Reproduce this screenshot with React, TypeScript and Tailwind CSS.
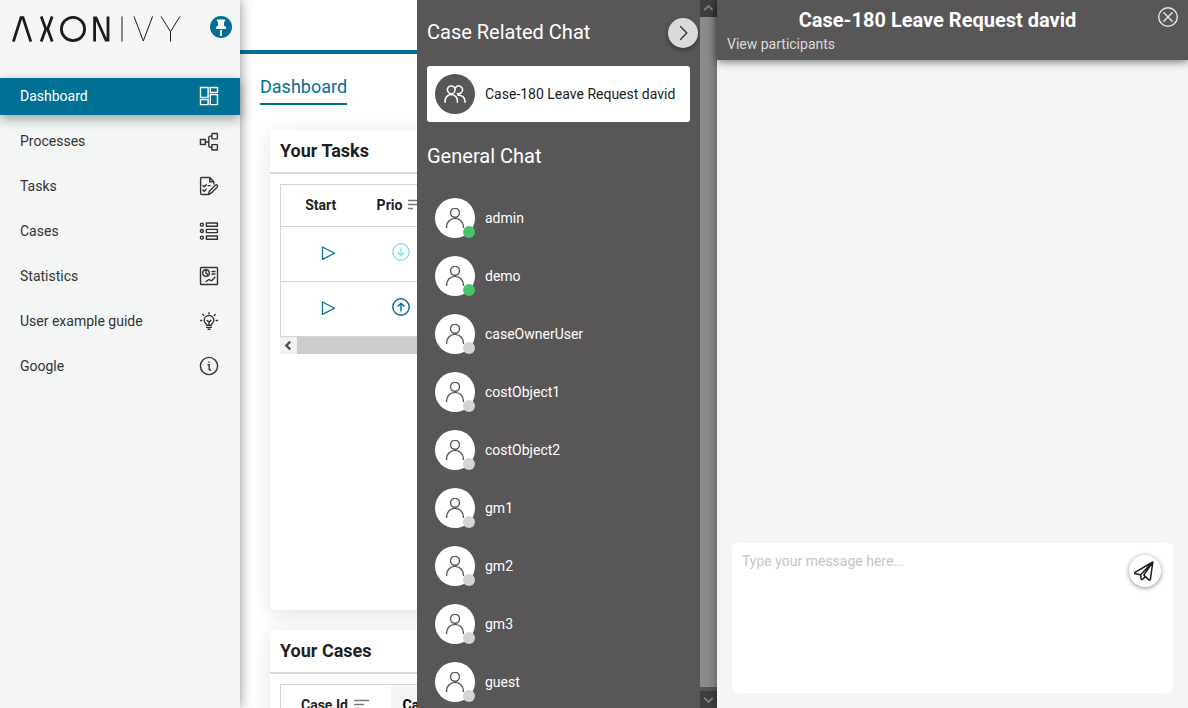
import type { ReactNode } from "react";
import clsx from "clsx";

interface IconProps {
  children: ReactNode;
  size?: string;
  width?: number;
  className?: string;
}

// All line icons share a 20x20 grid
function Icon({ children, size = "size-5", width = 1.4, className }: IconProps) {
  return (
    <svg
      viewBox="0 0 20 20"
      fill="none"
      stroke="currentColor"
      strokeWidth={width}
      strokeLinecap="round"
      strokeLinejoin="round"
      aria-hidden="true"
      className={clsx("shrink-0", size, className)}
    >
      {children}
    </svg>
  );
}

const menuItems = [
  {
    label: "Dashboard",
    active: true,
    icon: (
      <>
        <path d="M1.5 1.5h7.6v10H1.5zM11.3 1.5h7.2v5h-7.2zM1.5 13.6h7.6v5H1.5zM11.3 8.6h7.2v10h-7.2z" strokeLinejoin="miter" />
      </>
    ),
  },
  {
    label: "Processes",
    icon: (
      <>
        <rect x="1.4" y="8.5" width="5" height="5" />
        <rect x="12.8" y="2.5" width="5.6" height="5.4" rx="0.6" />
        <rect x="12.8" y="13.6" width="5.6" height="5.4" rx="0.6" />
        <path d="M6.4 11h3.4M12.8 5.1h-1.5q-1.5 0-1.5 1.5v8.2q0 1.5 1.5 1.5h1.5" />
      </>
    ),
  },
  {
    label: "Tasks",
    icon: (
      <>
        <path d="M14.8 8V5.8L10.8 1.5H2.9Q1.6 1.5 1.6 2.8v14.4q0 1.3 1.3 1.3h5.6M10.8 1.5v4.3h4" />
        <path d="M4 9.5l1.2 1.2 2-2M4 14l1.2 1.2 2-2M9.2 9.6h2M9.5 18.5l.8-3.2 6.2-6.2q.9-.6 1.7.1.8.9.1 1.7l-6.2 6.3z" />
      </>
    ),
  },
  {
    label: "Cases",
    icon: (
      <>
        <circle cx="2.9" cy="3.6" r="1.5" />
        <circle cx="2.9" cy="10" r="1.5" />
        <circle cx="2.9" cy="16.6" r="1.5" />
        <path d="M7.4 2h11v3.2h-11zM7.4 8.4h11v3.2h-11zM7.4 15h11v3.2h-11z" />
      </>
    ),
  },
  {
    label: "Statistics",
    icon: (
      <>
        <rect x="1.5" y="1.5" width="17" height="17" rx="0.8" />
        <circle cx="7" cy="7" r="3.3" />
        <path d="M7 3.7V7l2 2M13 5.5h3M13 8h3M7 15.5l3-2 2.5 1.3 3.5-3.6" />
      </>
    ),
  },
  {
    label: "User example guide",
    icon: (
      <>
        <path d="M7.6 14.2q0-1.2-1.2-2.2-1.2-1.1-1.2-2.7a4.8 4.8 0 0 1 9.6 0q0 1.6-1.2 2.7-1.2 1-1.2 2.2zM7.6 16.4h4.8M9 18.3h2M10 14v-3l-2-1.6M10 11l2-1.6" />
        <path d="M10 2.8V1.6M4.8 4.4l-1-1M15.2 4.4l1-1M2.8 9.5H1.5M17.2 9.5h1.3" />
      </>
    ),
  },
  {
    label: "Google",
    icon: (
      <>
        <circle cx="10" cy="10" r="8.6" />
        <path d="M9 8.8h1.2v4.4q0 .8.9.8h.5M10 6v.2" />
      </>
    ),
  },
];

const users = [
  { name: "admin", online: true },
  { name: "demo", online: true },
  { name: "caseOwnerUser", online: false },
  { name: "costObject1", online: false },
  { name: "costObject2", online: false },
  { name: "gm1", online: false },
  { name: "gm2", online: false },
  { name: "gm3", online: false },
  { name: "guest", online: false },
];

const tasks = [
  { id: 1, priority: "low" },
  { id: 2, priority: "high" },
];

function Logo() {
  return (
    <svg viewBox="0 0 170 26" fill="none" stroke="#1b1b1b" role="img" aria-label="Axon Ivy" className="h-[26px] w-[170px]">
      <g strokeWidth="2.8">
        <polyline points="1.4,25.6 9,1.6 11,1.6 18.8,25.6" />
        <polyline points="29.2,0.4 33.8,13 29.2,25.6" />
        <polyline points="40.2,0.4 35.6,13 40.2,25.6" />
        <circle cx="61" cy="13" r="11.6" />
        <polyline points="82.6,25.6 82.6,1.8 84,1.8 94,24.2 96,24.2 96,0.4" />
      </g>
      <g strokeWidth="1">
        <line x1="110" y1="0.4" x2="110" y2="25.6" />
        <polyline points="122,0.4 131.3,25 140.6,0.4" />
        <polyline points="149,0.4 158.5,15.6 168,0.4" />
        <line x1="158.5" y1="15.6" x2="158.5" y2="25.6" />
      </g>
    </svg>
  );
}

function Sidebar() {
  return (
    <aside className="z-10 w-60 shrink-0 bg-[#f4f6f5] shadow-[0_0_12px_rgba(0,0,0,0.45)]">
      <div className="flex h-[78px] items-start justify-between pt-4 pr-2 pl-3">
        <Logo />
        <button type="button" aria-label="Unpin menu" className="size-[22px] rounded-full bg-[#007095] text-white">
          <svg viewBox="0 0 22 22" fill="currentColor" aria-hidden="true" className="size-[22px]">
            <path d="M7 3.5h8v2h-1v4.2l2 1.3v2H6v-2l2-1.3V5.5H7zM10.1 14h1.8v6h-1.8z" />
          </svg>
        </button>
      </div>

      <nav className="flex flex-col gap-2">
        {menuItems.map((item) => (
          <a
            key={item.label}
            href="#"
            className={clsx(
              "flex h-[37px] items-center justify-between pr-[21px] pb-[2px] pl-5 text-sm",
              item.active
                ? "bg-[#007095] text-white shadow-[0_4px_12px_rgba(0,0,0,0.35)]"
                : "text-[#333333]"
            )}
          >
            {item.label}
            <Icon>{item.icon}</Icon>
          </a>
        ))}
      </nav>
    </aside>
  );
}

function SortIcon() {
  return (
    <svg viewBox="0 0 16 12" stroke="#777777" strokeWidth="1.6" aria-hidden="true" className="h-3 w-4">
      <path d="M0 1.5h15M0 5.5h10M0 9.5h5" />
    </svg>
  );
}

function Card({ title, children }: { title: string; children: ReactNode }) {
  return (
    <section className="h-[480px] rounded-[5px] bg-white shadow-[0_4px_20px_rgba(0,0,0,0.12)]">
      <h2 className="h-11 border-b-2 border-[#d8dada] px-[10px] text-lg leading-[42px] font-bold">
        {title}
      </h2>
      <div className="p-[10px]">{children}</div>
    </section>
  );
}

function Dashboard() {
  return (
    <main className="min-w-0 flex-1 overflow-hidden bg-white">
      {/* The chat covers the right part of the dashboard */}
      <div className="min-w-[900px]">
        <header className="h-[54px] border-b-4 border-[#007095]" />

        <div className="flex px-5 pt-5">
          <a href="#" className="h-[31px] border-b-2 border-[#007095] text-lg leading-[26px] text-[#007095]">
            Dashboard
          </a>
        </div>

        <div className="flex flex-col gap-5 px-[30px] pt-[25px]">
          <Card title="Your Tasks">
            <table className="w-full table-fixed border-collapse border border-[#d3d5d5] text-sm">
              <thead>
                <tr className="h-[42px] border-b border-[#d3d5d5]">
                  <th className="w-[94px] pr-[14px] pb-[2px] font-bold">Start</th>
                  <th className="w-[52px] pb-[2px] font-bold whitespace-nowrap">
                    <span className="flex items-center justify-center gap-[6px]">
                      Prio <SortIcon />
                    </span>
                  </th>
                  <th />
                </tr>
              </thead>
              <tbody>
                {tasks.map((task) => (
                  <tr key={task.id} className="h-[55px] border-b border-[#d3d5d5] text-[#007095]">
                    <td className="pb-[2px]">
                      <button type="button" aria-label="Start task" className="mx-auto block">
                        <Icon width={1.2} size="size-5">
                          <path d="M4.5 4v12.4l12-6.2z" />
                        </Icon>
                      </button>
                    </td>
                    <td className="pb-1">
                      <Icon
                        size="size-5"
                        width={1.4}
                        className={clsx("mx-auto", task.priority === "low" && "text-[#8fdfe8]")}
                      >
                        <circle cx="10" cy="10" r="8.2" />
                        {task.priority === "low" ? (
                          <path d="M10 6v7.6M7 10.7l3 3 3-3" />
                        ) : (
                          <path d="M10 14V6.4M7 9.3l3-3 3 3" />
                        )}
                      </Icon>
                    </td>
                    <td />
                  </tr>
                ))}
              </tbody>
            </table>
            <div className="flex h-[17px] bg-[#cdcdcd]">
              <button type="button" aria-label="Scroll left" className="w-[17px] bg-[#f1f1f1] text-[#505050]">
                <Icon size="size-[17px]" width={2.8}>
                  <path d="M12 5.5L7.5 10l4.5 4.5" strokeLinecap="butt" strokeLinejoin="miter" />
                </Icon>
              </button>
            </div>
          </Card>

          <Card title="Your Cases">
            <table className="w-full table-fixed border-collapse border border-[#d3d5d5] text-sm">
              <thead>
                <tr className="h-[42px] text-left">
                  <th className="w-[110px] pb-[2px] pl-5 font-bold whitespace-nowrap">
                    <span className="flex items-center gap-[6px]">
                      Case Id <SortIcon />
                    </span>
                  </th>
                  <th className="bg-[#f4f6f5] pb-[2px] pl-3 font-bold text-black">Case Name</th>
                </tr>
              </thead>
            </table>
          </Card>
        </div>
      </div>
    </main>
  );
}

function ChatContacts() {
  return (
    <aside className="flex w-[300px] shrink-0 bg-[#585657] text-white">
      <div className="min-w-0 flex-1 pl-[10px]">
        <div className="flex h-[66px] items-center justify-between pr-[2px]">
          <h2 className="pb-[2px] text-xl">Case Related Chat</h2>
          <button
            type="button"
            aria-label="Hide chat"
            className="flex size-[30px] items-center justify-center rounded-full bg-[#d9dbda] text-[#333333] shadow-[0_2px_5px_rgba(0,0,0,0.4)]"
          >
            <Icon width={1.3} size="size-5">
              <path d="M7.5 3.5l6.3 6.5-6.3 6.5" />
            </Icon>
          </button>
        </div>

        <button
          type="button"
          className="flex h-14 w-[263px] items-center gap-[10px] rounded-[3px] bg-white px-2 text-sm text-[#1b1b1b]"
        >
          <span className="flex size-10 items-center justify-center rounded-full bg-[#585657] text-white">
            <Icon size="size-[22px]" width={1.4}>
              <circle cx="6.6" cy="6.2" r="3.5" />
              <path d="M1 17.4v-1.3a5.6 5.6 0 0 1 11.2 0v1.3M10.6 4a3.5 3.5 0 1 1 1.6 5.5M12.8 11.2a5.4 5.4 0 0 1 6.3 5.2v1" />
            </Icon>
          </span>
          Case-180 Leave Request david
        </button>

        <h2 className="flex h-[67px] items-center text-xl">General Chat</h2>

        <ul>
          {users.map((user) => (
            <li key={user.name}>
              <button type="button" className="flex h-[58px] items-center gap-[10px] pl-2 text-sm">
                <span className="relative flex size-10 items-center justify-center rounded-full bg-white text-[#585657]">
                  <Icon size="size-5" width={1.4}>
                    <circle cx="10" cy="4.8" r="4.5" />
                    <path d="M1.6 19.4v-.6a8.4 8.4 0 0 1 16.8 0v.6" />
                  </Icon>
                  <span
                    className={clsx(
                      "absolute right-0 bottom-0 size-3 rounded-full",
                      user.online ? "bg-[#4bc26c]" : "bg-[#d3d5d5]"
                    )}
                  />
                </span>
                {user.name}
              </button>
            </li>
          ))}
        </ul>
      </div>

      {/* Scrollbar */}
      <div className="flex h-screen w-[17px] flex-col justify-between bg-[#8b8b8b] text-[#858585]">
        <button type="button" aria-label="Scroll up" className="h-[17px] bg-[#403e3f]">
          <Icon size="size-[17px]" width={2.2}>
            <path d="M5 12l5-5 5 5" strokeLinecap="butt" strokeLinejoin="miter" />
          </Icon>
        </button>
        <button type="button" aria-label="Scroll down" className="h-[21px] border-t-4 border-[#555354] bg-[#403e3f]">
          <Icon size="size-[17px]" width={2.2}>
            <path d="M5 8l5 5 5-5" strokeLinecap="butt" strokeLinejoin="miter" />
          </Icon>
        </button>
      </div>
    </aside>
  );
}

function ChatMessages() {
  return (
    <section className="z-10 flex w-[471px] shrink-0 flex-col bg-[#f4f6f5] shadow-[0_0_10px_rgba(0,0,0,0.4)]">
      <header className="flex h-[60px] items-start gap-[10px] bg-[#585657] px-[10px] text-white shadow-[0_2px_8px_rgba(0,0,0,0.5)]">
        <div className="flex-1">
          <h1 className="pt-[6px] text-center text-xl leading-7 font-bold">Case-180 Leave Request david</h1>
          <a href="#" className="block text-sm text-[#d9dbda]">View participants</a>
        </div>
        <button type="button" aria-label="Close chat" className="pt-[7px] text-[#e4e6e5]">
          <Icon width={1.4}>
            <circle cx="10" cy="10" r="9.3" />
            <path d="M5.8 5.8l8.4 8.4M14.2 5.8l-8.4 8.4" />
          </Icon>
        </button>
      </header>

      <div className="flex-1" />

      <form className="m-[15px] flex h-[150px] items-start rounded-md bg-white pr-3">
        <textarea
          aria-label="Message"
          placeholder="Type your message here..."
          className="h-full flex-1 resize-none bg-transparent px-[10px] py-2 text-sm outline-none placeholder:text-[#c4c6c6]"
        />
        <button
          type="button"
          aria-label="Send message"
          className="mt-3 flex size-8 items-center justify-center rounded-full bg-white pr-[3px] text-[#1b1b1b] shadow-[0_1px_5px_rgba(0,0,0,0.45)]"
        >
          <Icon width={1.5} size="size-5">
            <path d="M18.8 1L1 11.4q-.8.9.2 1.4l5.4 1zM18.8 1l-2.4 17.4q-.5 1.2-1.6.5L9.8 14zM6.6 13.8l.5 4q.5 1.2 1.5.5l2.4-2.4" />
          </Icon>
        </button>
      </form>
    </section>
  );
}

export default function App() {
  return (
    <div className="flex h-screen overflow-hidden font-['Roboto',sans-serif] text-[#1f1f1f]">
      <Sidebar />
      <Dashboard />
      <ChatContacts />
      <ChatMessages />
    </div>
  );
}
